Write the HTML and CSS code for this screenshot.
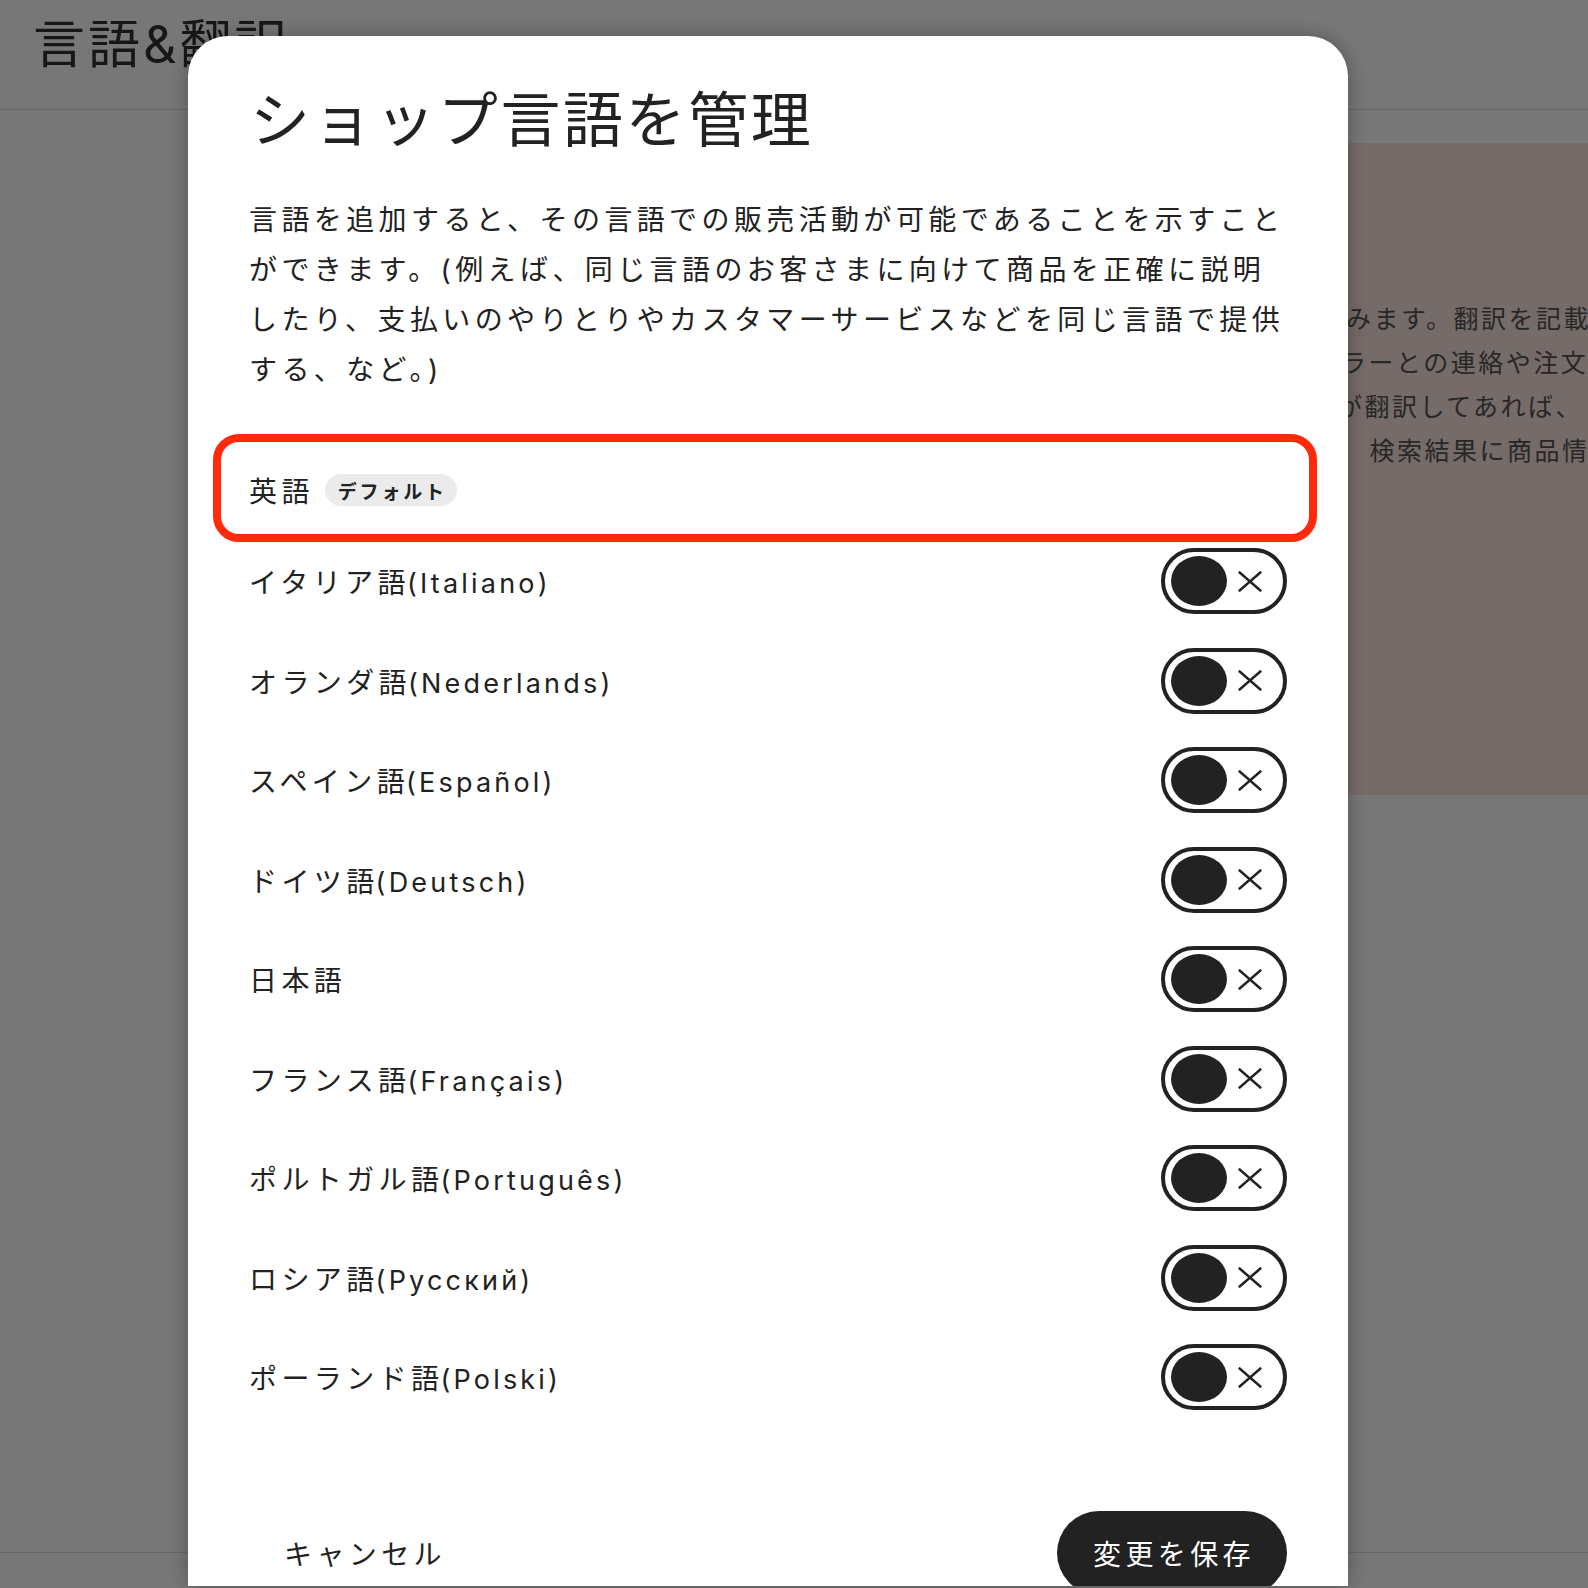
FILE: index.html
```html
<!DOCTYPE html>
<html lang="ja">
<head>
<meta charset="utf-8">
<title>ショップ言語を管理</title>
<link rel="stylesheet" href="styles.css">
</head>
<body>
  <div class="page">
    <header class="page-header">
      <h1 class="page-title">言語&amp;翻訳</h1>
    </header>
    <main class="page-main">
      <section class="promo">
        <p class="promo-line l1">の翻訳を自動で読み込みます。翻訳を記載すると、ショップの情報</p>
        <p class="promo-line l2">購入者はショップのセラーとの連絡や注文の確認を</p>
        <p class="promo-line l3">ショップのアナウンスが翻訳してあれば、</p>
        <p class="promo-line l4">別の言語で検索すると　検索結果に商品情報が表示</p>
      </section>
    </main>
    <footer class="page-footer"></footer>
  </div>

  <div class="backdrop"></div>

  <div class="modal">
    <h2 class="modal-title">ショップ言語を管理</h2>
    <p class="modal-desc">言語を追加すると、その言語での販売活動が可能であることを示すこと<br>ができます。(例えば、同じ言語のお客さまに向けて商品を正確に説明<br>したり、支払いのやりとりやカスタマーサービスなどを同じ言語で提供<br>する、など。)</p>

    <div class="lang-list">
      <div class="lang-default">
        <span class="lang-name">英語</span>
        <span class="pill">デフォルト</span>
      </div>

      <div class="lang-row">
        <span class="lang-name">イタリア語<span class="en">(Italiano)</span></span>
        <span class="toggle"><span class="knob"></span><span class="toggle-icon"><svg viewBox="0 0 24 21" width="24" height="21"><path d="M0.8 0.8L23.2 20.2M23.2 0.8L0.8 20.2" stroke="#222" stroke-width="2.6" fill="none"/></svg></span></span>
      </div>
      <div class="lang-row">
        <span class="lang-name">オランダ語<span class="en">(Nederlands)</span></span>
        <span class="toggle"><span class="knob"></span><span class="toggle-icon"><svg viewBox="0 0 24 21" width="24" height="21"><path d="M0.8 0.8L23.2 20.2M23.2 0.8L0.8 20.2" stroke="#222" stroke-width="2.6" fill="none"/></svg></span></span>
      </div>
      <div class="lang-row">
        <span class="lang-name">スペイン語<span class="en">(Español)</span></span>
        <span class="toggle"><span class="knob"></span><span class="toggle-icon"><svg viewBox="0 0 24 21" width="24" height="21"><path d="M0.8 0.8L23.2 20.2M23.2 0.8L0.8 20.2" stroke="#222" stroke-width="2.6" fill="none"/></svg></span></span>
      </div>
      <div class="lang-row">
        <span class="lang-name">ドイツ語<span class="en">(Deutsch)</span></span>
        <span class="toggle"><span class="knob"></span><span class="toggle-icon"><svg viewBox="0 0 24 21" width="24" height="21"><path d="M0.8 0.8L23.2 20.2M23.2 0.8L0.8 20.2" stroke="#222" stroke-width="2.6" fill="none"/></svg></span></span>
      </div>
      <div class="lang-row">
        <span class="lang-name">日本語</span>
        <span class="toggle"><span class="knob"></span><span class="toggle-icon"><svg viewBox="0 0 24 21" width="24" height="21"><path d="M0.8 0.8L23.2 20.2M23.2 0.8L0.8 20.2" stroke="#222" stroke-width="2.6" fill="none"/></svg></span></span>
      </div>
      <div class="lang-row">
        <span class="lang-name">フランス語<span class="en">(Français)</span></span>
        <span class="toggle"><span class="knob"></span><span class="toggle-icon"><svg viewBox="0 0 24 21" width="24" height="21"><path d="M0.8 0.8L23.2 20.2M23.2 0.8L0.8 20.2" stroke="#222" stroke-width="2.6" fill="none"/></svg></span></span>
      </div>
      <div class="lang-row">
        <span class="lang-name">ポルトガル語<span class="en">(Português)</span></span>
        <span class="toggle"><span class="knob"></span><span class="toggle-icon"><svg viewBox="0 0 24 21" width="24" height="21"><path d="M0.8 0.8L23.2 20.2M23.2 0.8L0.8 20.2" stroke="#222" stroke-width="2.6" fill="none"/></svg></span></span>
      </div>
      <div class="lang-row">
        <span class="lang-name">ロシア語<span class="en">(Русский)</span></span>
        <span class="toggle"><span class="knob"></span><span class="toggle-icon"><svg viewBox="0 0 24 21" width="24" height="21"><path d="M0.8 0.8L23.2 20.2M23.2 0.8L0.8 20.2" stroke="#222" stroke-width="2.6" fill="none"/></svg></span></span>
      </div>
      <div class="lang-row">
        <span class="lang-name">ポーランド語<span class="en">(Polski)</span></span>
        <span class="toggle"><span class="knob"></span><span class="toggle-icon"><svg viewBox="0 0 24 21" width="24" height="21"><path d="M0.8 0.8L23.2 20.2M23.2 0.8L0.8 20.2" stroke="#222" stroke-width="2.6" fill="none"/></svg></span></span>
      </div>
    </div>

    <div class="modal-actions">
      <button class="btn btn-cancel" type="button">キャンセル</button>
      <button class="btn btn-save" type="button">変更を保存</button>
    </div>
  </div>

  <div class="annotation"></div>
</body>
</html>
```

FILE: styles.css
```css
* {
  box-sizing: border-box;
  margin: 0;
  padding: 0;
}

html,
body {
  width: 1588px;
  height: 1588px;
  overflow: hidden;
}

body {
  position: relative;
  background: #ffffff;
  color: #222222;
  font-family: Inter, "Noto Sans CJK JP", sans-serif;
}

/* ---------- background page ---------- */
.page {
  height: 1588px;
  display: flex;
  flex-direction: column;
}

.page-header {
  height: 110px;
  border-bottom: 1px solid #dcdcdc;
  padding: 15px 0 0 33px;
}

.page-title {
  font-size: 52px;
  line-height: 60px;
  font-weight: 400;
  letter-spacing: 3px;
  color: #333333;
}

.page-main {
  padding-top: 33px;
  display: flex;
  justify-content: flex-end;
}

.promo {
  width: 588px;
  height: 652px;
  background: #fae6de;
  padding: 154px 0 0 71px;
  overflow: hidden;
}

.promo-line {
  font-size: 25px;
  line-height: 44px;
  letter-spacing: 2.5px;
  white-space: nowrap;
  color: #555555;
}

.promo-line.l2 { text-indent: -5px; }
.promo-line.l3 { text-indent: -8px; }
.promo-line.l4 { text-indent: -4px; }

.page-footer {
  margin-top: auto;
  height: 36px;
  border-top: 1px solid #dcdcdc;
}

/* ---------- overlay ---------- */
.backdrop {
  position: absolute;
  inset: 0;
  background: rgba(0, 0, 0, 0.535);
}

/* ---------- modal ---------- */
.modal {
  position: absolute;
  left: 188px;
  top: 35.5px;
  width: 1160px;
  height: 1550.5px;
  background: #ffffff;
  border-radius: 40px 40px 0 0;
  overflow: hidden;
  padding: 49px 61px 0 61px;
  box-shadow: 0 0 18px rgba(0, 0, 0, 0.3);
}

.modal-title {
  font-size: 60px;
  line-height: 70px;
  font-weight: 400;
  letter-spacing: 2.6px;
  color: #222222;
  padding-left: 1px;
}

.modal-desc {
  margin-top: 40px;
  font-size: 28px;
  line-height: 50px;
  letter-spacing: 4.4px;
  white-space: nowrap;
  color: #222222;
}

.lang-list {
  margin-top: 54px;
}

.lang-default {
  height: 83px;
  display: flex;
  align-items: center;
  gap: 11px;
}

.lang-name {
  font-size: 28px;
  letter-spacing: 4.4px;
  color: #222222;
  white-space: nowrap;
}

.lang-name .en {
  font-size: 27px;
  letter-spacing: 3.2px;
  margin-left: -3px;
}

.pill {
  display: inline-flex;
  align-items: center;
  height: 32px;
  padding: 0 10px 0 13px;
  border-radius: 16px;
  background: #ebebeb;
  font-size: 19px;
  font-weight: 700;
  letter-spacing: 2.8px;
  color: #222222;
}

.lang-row {
  height: 99.5px;
  display: flex;
  align-items: center;
  justify-content: space-between;
}

.toggle {
  width: 126px;
  height: 66px;
  border: 4px solid #222222;
  border-radius: 33px;
  padding: 4px 4px 4px 6px;
  display: flex;
  align-items: center;
  background: #ffffff;
}

.knob {
  width: 56px;
  height: 50px;
  border-radius: 50%;
  background: #222222;
  flex-shrink: 0;
}

.toggle-icon {
  flex: 1;
  display: flex;
  align-items: center;
  justify-content: center;
  padding-right: 6px;
}

.toggle-icon svg {
  display: block;
}

.modal-actions {
  margin-top: 84px;
  display: flex;
  justify-content: space-between;
  align-items: center;
}

.btn {
  font-family: inherit;
  font-size: 28px;
  letter-spacing: 4.4px;
  height: 84px;
  border: none;
  cursor: pointer;
}

.btn-cancel {
  background: transparent;
  color: #222222;
  padding: 0 35px;
}

.btn-save {
  background: #222222;
  color: #ffffff;
  border-radius: 42px;
  padding: 0 32px 0 36px;
}

/* ---------- annotation ---------- */
.annotation {
  position: absolute;
  left: 212.5px;
  top: 433.5px;
  width: 1104px;
  height: 108.5px;
  border: 8.5px solid #ff2a0c;
  border-radius: 26px;
  pointer-events: none;
}
```
